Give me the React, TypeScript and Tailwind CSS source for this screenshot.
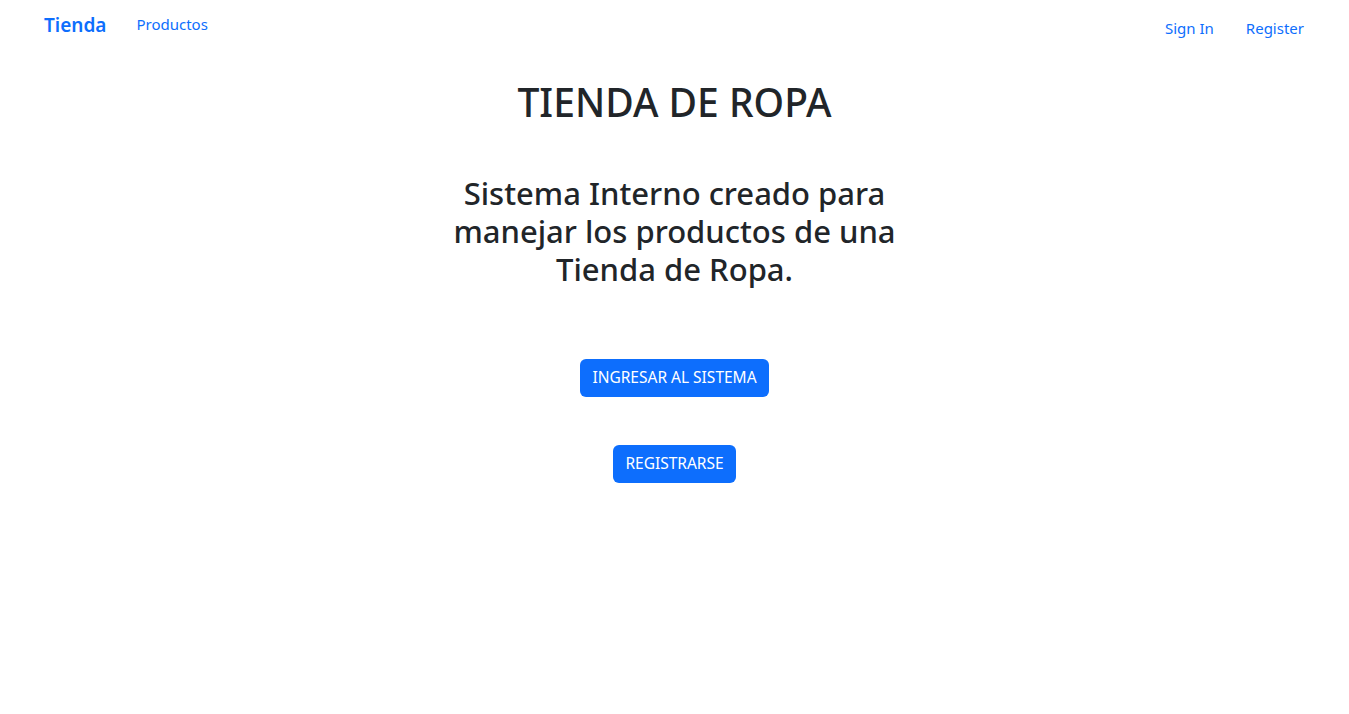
import React from "react";

const font = { fontFamily: '"Noto Sans", "Open Sans", sans-serif' };

export default function App() {
    return (
        <div className="min-h-screen bg-white text-[#212529]" style={font}>
            <nav className="flex items-start justify-between pl-[44px] pr-[45px]">
                <div className="flex items-center">
                    <a className="mt-[10px] text-[19px] font-semibold leading-[30px] text-[#0d6efd]">Tienda</a>
                    <a className="ml-[30px] mt-[8px] text-[15px] leading-[30px] text-[#0d6efd]">Productos</a>
                </div>
                <div className="mt-[13px] flex items-center gap-[32px]">
                    <a className="text-[15px] leading-[30px] text-[#0d6efd]">Sign In</a>
                    <a className="text-[15px] leading-[30px] text-[#0d6efd]">Register</a>
                </div>
            </nav>
            <main className="flex flex-col items-center text-center">
                <h1 className="mt-[35px] text-[39px] font-medium leading-[48px]">TIENDA DE ROPA</h1>
                <h2 className="mt-[48px] w-[462px] text-[31px] font-medium leading-[38px]">
                    Sistema Interno creado para manejar los productos de una Tienda de Ropa.
                </h2>
                <button className="mt-[71px] h-[38px] rounded-[6px] bg-[#0d6efd] px-[12px] text-[15.5px] text-white">
                    INGRESAR AL SISTEMA
                </button>
                <button className="mt-[48px] h-[38px] rounded-[6px] bg-[#0d6efd] px-[12px] text-[15.5px] text-white">
                    REGISTRARSE
                </button>
            </main>
        </div>
    );
}
